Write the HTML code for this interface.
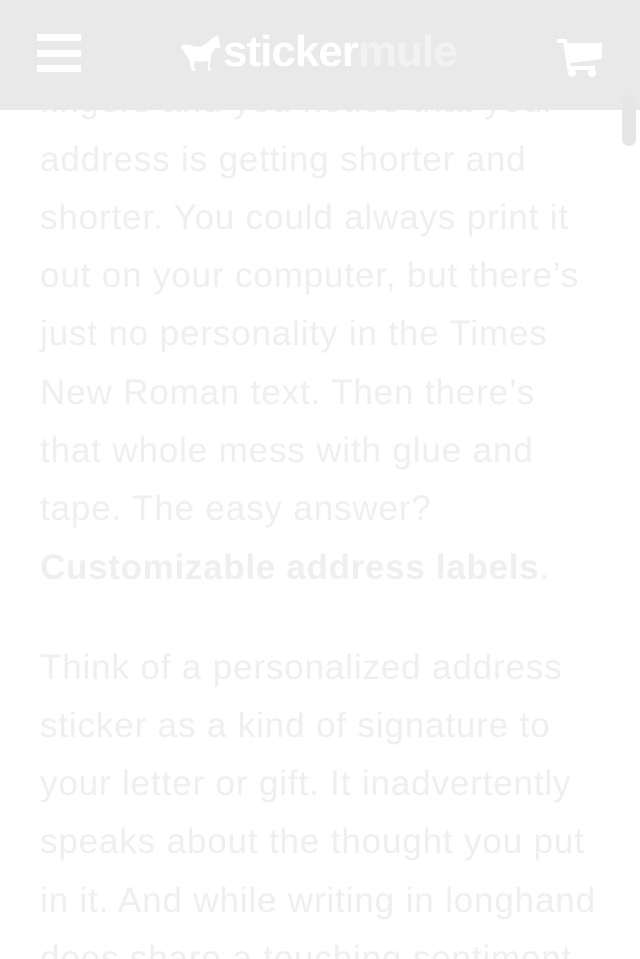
<!DOCTYPE html>
<html><head><meta charset="utf-8"><style>
html,body{margin:0;padding:0;background:#fff;width:640px;height:959px;overflow:hidden;}
body{font-family:"Liberation Sans",Helvetica,Arial,sans-serif;color:#efefef;position:relative;}
.t{position:absolute;left:40px;font-size:35px;line-height:58.3px;white-space:nowrap;letter-spacing:0.85px;}
.hdr{position:absolute;left:0;top:0;width:640px;height:110px;background:#e9e9e9;}
.bar{position:absolute;left:37px;width:44px;height:7px;background:#fff;}
.sb{position:absolute;left:622px;top:95px;width:14px;height:51px;border-radius:7px;background:#e6e6e6;}
</style></head><body>
<div class="t" style="top:72.3px">fingers and you notice that your</div>
<div class="t" style="top:130.6px">address is getting shorter and<br>shorter. You could always print it<br>out on your computer, but there’s<br>just no personality in the Times<br>New Roman text. Then there’s<br>that whole mess with glue and<br>tape. The easy answer?<br><b style="letter-spacing:0.7px">Customizable address labels</b>.</div>
<div class="t" style="top:638.6px">Think of a personalized address<br>sticker as a kind of signature to<br>your letter or gift. It inadvertently<br>speaks about the thought you put<br>in it. And while writing in longhand<br>does share a touching sentiment</div>
<div class="hdr">
<div class="bar" style="top:34px"></div><div class="bar" style="top:50px"></div><div class="bar" style="top:65px"></div>
<svg style="position:absolute;left:179px;top:34px" width="42" height="38" viewBox="0 0 26 31" preserveAspectRatio="none"><path d="M1 10 Q3 8 7 9 Q10 11 14 10 Q18 7 21 3 L24 1 L25 6 Q26 11 25 12 L23 11 Q21 13 20 17 L19 27 L20 30 L18 30 L18 22 Q14 23 10 22 L9 27 L11 30 L8 30 L6 20 Q4 17 3 14 Z" fill="#fff"/></svg>
<div style="position:absolute;left:223px;top:27px;font-size:44px;font-weight:bold;letter-spacing:-1px;color:#fff;line-height:50px">sticker<span style="color:#f2f2f2">mule</span></div>
<svg style="position:absolute;left:555px;top:38px" width="48" height="40" viewBox="0 0 48 40"><path d="M2 3 H10 L14 30 H40" stroke="#fff" stroke-width="4" fill="none"/><path d="M12 5 H47 V21 L15 25 Z" fill="#fff"/><circle cx="17" cy="35" r="4" fill="#fff"/><circle cx="37" cy="35" r="4" fill="#fff"/></svg>
</div>
<div class="sb"></div>
</body></html>
